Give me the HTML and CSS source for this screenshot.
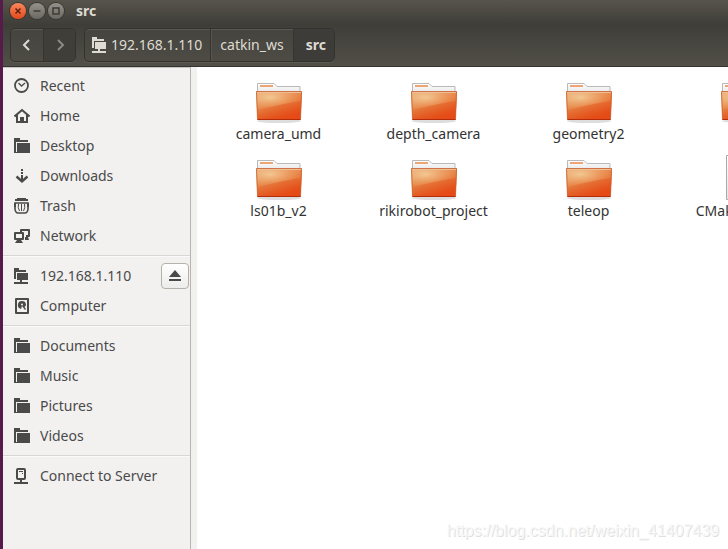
FILE: index.html
```html
<!DOCTYPE html>
<html lang="en">
<head>
<meta charset="utf-8">
<title>src</title>
<link rel="stylesheet" href="styles.css">
</head>
<body>
<svg class="defs" aria-hidden="true">
  <defs>
    <linearGradient id="front" x1="0" y1="0" x2="0.4" y2="1">
      <stop offset="0" stop-color="#e8ae7a"/><stop offset="0.5" stop-color="#e58a4c"/><stop offset="1" stop-color="#e2531e"/>
    </linearGradient>
    <radialGradient id="glow" cx="0.3" cy="0.3" r="0.8">
      <stop offset="0" stop-color="#f5d3a0" stop-opacity="0.8"/><stop offset="1" stop-color="#f0a060" stop-opacity="0.1"/>
    </radialGradient>
    <linearGradient id="paper" x1="0" y1="0" x2="0" y2="1">
      <stop offset="0" stop-color="#ffffff"/><stop offset="1" stop-color="#e4e4e4"/>
    </linearGradient>
    <linearGradient id="shade" x1="0.2" y1="0.2" x2="1" y2="1">
      <stop offset="0" stop-color="#e8500f" stop-opacity="0"/><stop offset="1" stop-color="#e8400f" stop-opacity="0.6"/>
    </linearGradient>
  </defs>
  <symbol id="folder" viewBox="0 0 16 16"><path d="M0 0h6v2h8v2H2v11H0z"/><path d="M3 5h13v10H3z"/><path d="M0 14h4v1H0z"/></symbol>
  <symbol id="remote" viewBox="0 0 16 16"><path d="M0 0h5v2h7v2H2v7H0z"/><path d="M3 5h11v7H3z"/><path d="M6 12h2v2h6v2H0v-2h6z"/></symbol>
  <symbol id="recent" viewBox="0 0 16 16"><circle cx="7.500" cy="7.500" r="6.500" fill="none" stroke="currentColor" stroke-width="1.800"/><path d="M4.500 5l3 3 3.500-3" fill="none" stroke="currentColor" stroke-width="1.300"/></symbol>
  <symbol id="home" viewBox="0 0 16 16"><path d="M0.500 8.500L8 2l7.500 6.500M3 7v7h10V7" fill="none" stroke="currentColor" stroke-width="2"/><path d="M6 9h4v5H6z"/></symbol>
  <symbol id="download" viewBox="0 0 16 16"><path d="M7 1h2v2H7zM7 4h2v2H7zM7 7h2v5H7z"/><path d="M2.500 8.500L8 13.500l5.500-5" fill="none" stroke="currentColor" stroke-width="2.400"/></symbol>
  <symbol id="trash" viewBox="0 0 16 16"><path d="M3 0h9v1h2v2H1V1h2z"/><path d="M1 5h13v6q-.5 4-3 4H4q-2.500 0-3-4z" fill="none" stroke="currentColor" stroke-width="1.600"/><path d="M0 5h2v4H0zM13 5h2v4h-2z"/><path d="M4.500 6q-1 3.500 1 7M7.500 6v7M10.500 6q1 3.500-1 7" fill="none" stroke="currentColor"/></symbol>
  <symbol id="network" viewBox="0 0 16 16"><path d="M7 4V2h8v6h-3" fill="none" stroke="currentColor" stroke-width="2" stroke-linejoin="round"/><path d="M1 5h8v6H1z" fill="none" stroke="currentColor" stroke-width="2" stroke-linejoin="round"/><path d="M3 12h4l2 3H1zM11 9h3l1 3h-4z"/></symbol>
  <symbol id="disk" viewBox="0 0 16 16"><path d="M2 1h12v14H2z" fill="none" stroke="currentColor" stroke-width="2" stroke-linejoin="round"/><path d="M8 3a4 4 0 0 0-1 7.900l1-3 3 4 1-1-1.500-2q1.500-1 1.500-2.500A4 4 0 0 0 8 3zm0 2.500a1 1 0 1 1 0 2 1 1 0 0 1 0-2z"/></symbol>
  <symbol id="server" viewBox="0 0 16 16"><rect x="3" y="1" width="8" height="10" rx="1" fill="none" stroke="currentColor" stroke-width="2"/><path d="M5 3h4v1H5zM8 5h1v1H8zM6 12h2v2h6v2H0v-2h6z"/></symbol>
  <symbol id="bigfolder" viewBox="0 0 48 42">
    <ellipse cx="24" cy="39" rx="22" ry="2" fill="#bbb" opacity="0.500"/>
    <path d="M2.500 12V1.500H19l3 3h23V12z" fill="url(#paper)" stroke="#b9b9b9"/>
    <path d="M5 3h13v2H5z" fill="#eea474"/>
    <path d="M1 9.500h46L45.500 37.500H2.500z" fill="url(#front)"/>
    <path d="M1 9.500h46L45.500 37.500H2.500z" fill="url(#shade)"/>
    <path d="M2 10h45l-.5 9Q30 21 2.500 28z" fill="url(#glow)"/>
    <path d="M1.500 9.500h45L45.500 37.500H2.500z" fill="none" stroke="#c8602e" opacity="0.800"/>
    <path d="M2 10.500h44" stroke="#f1bd94"/>
    <path d="M2.500 37.500h43" stroke="#b52c0a"/>
  </symbol>
</svg>
<div class="window">
  <header class="chrome">
    <div class="titlebar">
      <button class="win close" aria-label="Close"><svg viewBox="0 0 16 16"><path d="M5.500 5.500l5 5M10.500 5.500l-5 5"/></svg></button>
      <button class="win" aria-label="Minimize"><svg viewBox="0 0 16 16"><path d="M4.500 8h7"/></svg></button>
      <button class="win" aria-label="Maximize"><svg viewBox="0 0 16 16"><path d="M5 5h6v6H5z"/></svg></button>
      <h1 class="title">src</h1>
    </div>
    <nav class="toolbar" aria-label="Location">
      <div class="group">
        <button class="step" aria-label="Back"><svg viewBox="0 0 16 16"><path d="M10 3L5 8l5 5"/></svg></button>
        <button class="step forward" aria-label="Forward"><svg viewBox="0 0 16 16"><path d="M6 3l5 5-5 5"/></svg></button>
      </div>
      <div class="group">
        <button class="crumb host"><svg class="icon"><use href="#remote"/></svg>192.168.1.110</button>
        <button class="crumb">catkin_ws</button>
        <button class="crumb current">src</button>
      </div>
    </nav>
  </header>
  <div class="body">
    <aside class="sidebar">
      <ul class="places">
        <li><a href="#"><svg class="icon"><use href="#recent"/></svg>Recent</a></li>
        <li><a href="#"><svg class="icon"><use href="#home"/></svg>Home</a></li>
        <li><a href="#"><svg class="icon"><use href="#folder"/></svg>Desktop</a></li>
        <li><a href="#"><svg class="icon"><use href="#download"/></svg>Downloads</a></li>
        <li><a href="#"><svg class="icon"><use href="#trash"/></svg>Trash</a></li>
        <li><a href="#"><svg class="icon"><use href="#network"/></svg>Network</a></li>
      </ul>
      <ul class="places">
        <li><a href="#"><svg class="icon"><use href="#remote"/></svg>192.168.1.110</a><button class="eject" aria-label="Eject"><svg viewBox="0 0 14 12"><path d="M7 0l6 7H1zM1 9h12v2H1z"/></svg></button></li>
        <li><a href="#"><svg class="icon"><use href="#disk"/></svg>Computer</a></li>
      </ul>
      <ul class="places">
        <li><a href="#"><svg class="icon"><use href="#folder"/></svg>Documents</a></li>
        <li><a href="#"><svg class="icon"><use href="#folder"/></svg>Music</a></li>
        <li><a href="#"><svg class="icon"><use href="#folder"/></svg>Pictures</a></li>
        <li><a href="#"><svg class="icon"><use href="#folder"/></svg>Videos</a></li>
      </ul>
      <ul class="places">
        <li><a href="#"><svg class="icon"><use href="#server"/></svg>Connect to Server</a></li>
      </ul>
    </aside>
    <main class="files">
      <div class="grid">
        <a class="file" href="#"><svg class="thumb"><use href="#bigfolder"/></svg><span class="name">camera_umd</span></a>
        <a class="file" href="#"><svg class="thumb"><use href="#bigfolder"/></svg><span class="name">depth_camera</span></a>
        <a class="file" href="#"><svg class="thumb"><use href="#bigfolder"/></svg><span class="name">geometry2</span></a>
        <a class="file" href="#"><svg class="thumb"><use href="#bigfolder"/></svg><span class="name"></span></a>
        <a class="file" href="#"><svg class="thumb"><use href="#bigfolder"/></svg><span class="name">ls01b_v2</span></a>
        <a class="file" href="#"><svg class="thumb"><use href="#bigfolder"/></svg><span class="name">rikirobot_project</span></a>
        <a class="file" href="#"><svg class="thumb"><use href="#bigfolder"/></svg><span class="name">teleop</span></a>
        <a class="file" href="#"><svg class="thumb doc" viewBox="0 0 38 47"><path d="M1.500 1.500h35v44h-35z" fill="url(#paper)" stroke="#aaa"/></svg><span class="name">CMakeLists.txt</span></a>
      </div>
      <p class="watermark">https://blog.csdn.net/weixin_41407439</p>
    </main>
  </div>
</div>
</body>
</html>
```
FILE: styles.css
```css
* { box-sizing: border-box; }
body {
  margin: 0;
  background: #561a4b;
  font: 14px/20px "Noto Sans", "Open Sans", sans-serif;
  color: #3c3c3c;
  overflow: hidden;
}
button { font: inherit; color: inherit; margin: 0; padding: 0; border: 0; background: none; }
a { color: inherit; text-decoration: none; }
.defs { position: absolute; width: 0; height: 0; }
.window { display: flex; flex-direction: column; height: 100vh; margin-left: 3px; }

.chrome { background: linear-gradient(#57544c, #3e3d38 25px, #403f3a 27px, #514f47 66px); border-bottom: 1px solid #34332f; color: #dfdbd2; }
.titlebar { display: flex; align-items: center; gap: 3px; height: 22px; padding-left: 7px; }
.win { width: 16px; height: 16px; border-radius: 50%; background: linear-gradient(#94928a, #6b6962); box-shadow: 0 0 0 1px #393832; color: #3c3b37; }
.win svg { display: block; fill: none; stroke: currentColor; stroke-width: 1.5; }
.close { background: linear-gradient(#f8875c, #e5491c); color: #5d2110; }
.title { margin: 0 0 0 9px; font-size: 14px; line-height: 20px; font-weight: 700; }
.toolbar { display: flex; gap: 8px; padding: 6px 7px 4px; }
.group { display: flex; height: 34px; border: 1px solid #33322e; border-radius: 5px; background: linear-gradient(#45443f, #4d4b44); box-shadow: inset 0 1px #5b5951, 0 1px #5b5951; overflow: hidden; }
.step { display: grid; place-items: center; width: 32px; }
.step svg { width: 16px; height: 16px; fill: none; stroke: currentColor; stroke-width: 2; }
.forward { background: #3f3e39; color: #8d8a82; border-left: 1px solid #35342f; }
.crumb { display: flex; align-items: center; padding: 0 9px; }
.crumb + .crumb { border-left: 1px solid #35342f; box-shadow: inset 1px 0 #57554d; }
.host { gap: 3px; padding: 0 8px 0 7px; }
.crumb.current { background: #3d3c38; font-weight: 700; padding: 0 8px 0 12px; box-shadow: none; }

.body { display: flex; flex: 1; min-height: 0; background: #f2f1f0; }
.sidebar { flex: 0 0 188px; padding-top: 3px; border-right: 1px solid #b8b4ae; border-top: 1px solid #c9c6c1; color: #4a4a4a; }
.places { list-style: none; margin: 0; padding: 0; }
.places + .places { margin-top: 4px; padding-top: 5px; border-top: 1px solid #d9d7d5; box-shadow: inset 0 1px #fafafa; }
.places li { display: flex; align-items: center; height: 30px; }
.places a { display: flex; align-items: center; flex: 1; gap: 10px; padding-left: 11px; white-space: nowrap; }
.icon { flex: none; width: 16px; height: 16px; fill: currentColor; }
.eject { display: grid; place-items: center; width: 28px; height: 26px; margin-right: 1px; border: 1px solid #b4b1ab; border-radius: 4px; background: linear-gradient(#fff, #ececeb); }
.eject svg { width: 14px; height: 12px; fill: #4a4a4a; }

.files { position: relative; flex: 1; min-width: 0; margin-left: 6px; background: #fff; overflow: hidden; }
.grid { display: grid; grid-template-columns: repeat(4, 155px); grid-auto-rows: 77px; padding-left: 4px; }
.file { display: flex; flex-direction: column; align-items: center; justify-content: flex-end; color: #333; padding-bottom: 1px; }
.name { height: 19px; }
.thumb { width: 48px; height: 42px; }
.doc { width: 38px; height: 47px; }
.watermark { position: absolute; right: 9px; bottom: 8px; margin: 0; font: 16px/20px "Liberation Sans", sans-serif; color: #f8f8f8; text-shadow: 1px 1px #e0e0e0; }
```
